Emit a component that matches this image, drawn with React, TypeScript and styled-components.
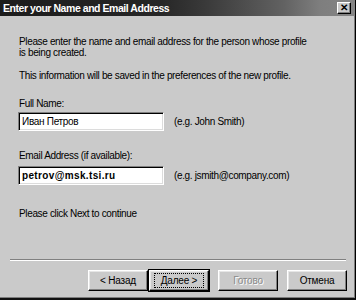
import React from "react";
import styled, { createGlobalStyle, css } from "styled-components";

const Global = createGlobalStyle`
  html, body { margin: 0; padding: 0; background: #c9c9c9; }
  body { width: 356px; height: 300px; overflow: hidden; }
`;

const Window = styled.div`
  width: 356px;
  height: 300px;
  box-sizing: border-box;
  background: #cacaca;
  border-right: 1px solid #000;
  border-bottom: 2px solid #111;
  box-shadow: inset -1px 0 0 #7d7d7d, inset 0 -1px 0 #7d7d7d;
  display: flex;
  flex-direction: column;
  font-family: "Liberation Sans", Arial, sans-serif;
  color: #000;
`;

const TitleBar = styled.div`
  height: 16px;
  display: flex;
  align-items: center;
  justify-content: space-between;
  padding: 0 3px 0 3px;
  background: linear-gradient(to right, #1c1c1c 0%, #262626 45%, #3a3a3a 58%, #626262 80%, #7e7e7e 90%, #858585 100%);
`;

const Title = styled.span`
  color: #fff;
  font-weight: bold;
  font-size: 10.5px;
  letter-spacing: -0.45px;
`;

const CloseBtn = styled.div`
  width: 12px;
  height: 10px;
  background: #cacaca;
  border: 1px solid;
  border-color: #fff #000 #000 #fff;
  box-shadow: inset -1px -1px 0 #808080;
  display: flex;
  align-items: center;
  justify-content: center;
  font-size: 10px;
  font-weight: bold;
  line-height: 1;
  margin-right: 1px;
`;

const Body = styled.div`
  flex: 1;
  display: flex;
  flex-direction: column;
  padding: 0 0 0 19px;
`;

const Text = styled.div<{ $mt: number }>`
  margin-top: ${(p) => p.$mt}px;
  font-size: 10px;
  line-height: 11px;
  letter-spacing: -0.35px;
`;

const FieldRow = styled.div<{ $mt: number }>`
  margin-top: ${(p) => p.$mt}px;
  margin-left: -1px;
  display: flex;
  align-items: center;
  gap: 10px;
`;

const Input = styled.div<{ $bold?: boolean }>`
  width: 146px;
  height: 19px;
  box-sizing: border-box;
  background: #fff;
  border: 1px solid;
  border-color: #808080 #fff #fff #808080;
  box-shadow: inset 1px 1px 0 #000, inset -1px -1px 0 #dcdcdc;
  padding: 0 0 0 3px;
  display: flex;
  align-items: center;
  ${(p) =>
    p.$bold
      ? css`
          font-weight: bold;
          font-size: 10px;
          letter-spacing: 0.35px;
        `
      : css`
          font-size: 10px;
          letter-spacing: -0.3px;
        `}
`;

const Hint = styled.span`
  font-size: 10px;
  letter-spacing: -0.35px;
`;

const Footer = styled.div`
  margin-top: auto;
  display: flex;
  flex-direction: column;
  padding: 0 8px 7px 10px;
`;

const Separator = styled.div`
  height: 0;
  border-top: 1px solid #808080;
  border-bottom: 1px solid #fff;
  margin-right: 1px;
`;

const ButtonRow = styled.div`
  margin-top: 9px;
  display: flex;
  justify-content: flex-end;
`;

const Button = styled.div<{ $def?: boolean; $disabled?: boolean; $gap?: number }>`
  flex: 0 0 auto;
  width: 60px;
  height: 21px;
  box-sizing: border-box;
  margin-left: ${(p) => p.$gap ?? 0}px;
  background: #cacaca;
  border: 1px solid;
  border-color: #fff #000 #000 #fff;
  box-shadow: inset -1px -1px 0 #808080, inset 1px 1px 0 #e6e6e6;
  display: flex;
  align-items: center;
  justify-content: center;
  font-size: 10px;
  letter-spacing: -0.2px;
  ${(p) =>
    p.$def &&
    css`
      width: 60px;
      margin-left: 1px;
      outline: 1px solid #000;
      outline-offset: 0;
    `}
  ${(p) =>
    p.$disabled &&
    css`
      color: #8a8a8a;
      text-shadow: 1px 1px 0 #fff;
    `}
`;

const Focus = styled.span`
  border: 1px dotted #000;
  padding: 1px 6px;
  line-height: 11px;
`;

export default function App() {
  return (
    <>
      <Global />
      <Window>
        <TitleBar>
          <Title>Enter your Name and Email Address</Title>
          <CloseBtn>✕</CloseBtn>
        </TitleBar>
        <Body>
          <Text $mt={20}>
            Please enter the name and email address for the person whose profile
            <br />
            is being created.
          </Text>
          <Text $mt={12}>This information will be saved in the preferences of the new profile.</Text>
          <Text $mt={17}>Full Name:</Text>
          <FieldRow $mt={3}>
            <Input>Иван Петров</Input>
            <Hint>(e.g. John Smith)</Hint>
          </FieldRow>
          <Text $mt={19}>Email Address (if available):</Text>
          <FieldRow $mt={5}>
            <Input $bold>petrov@msk.tsi.ru</Input>
            <Hint>(e.g. jsmith@company.com)</Hint>
          </FieldRow>
          <Text $mt={23}>Please click Next to continue</Text>
        </Body>
        <Footer>
          <Separator />
          <ButtonRow>
            <Button>&lt; Назад</Button>
            <Button $def>
              <Focus>Далее &gt;</Focus>
            </Button>
            <Button $disabled $gap={9}>Готово</Button>
            <Button $gap={9}>Отмена</Button>
          </ButtonRow>
        </Footer>
      </Window>
    </>
  );
}
